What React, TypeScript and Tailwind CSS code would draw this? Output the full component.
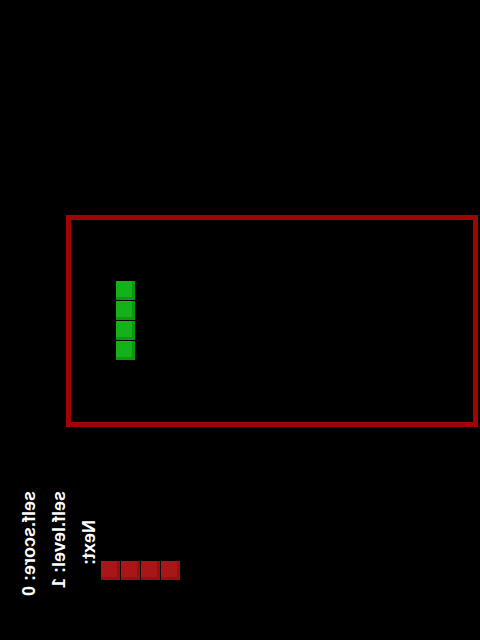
const Block = ({ color }: { color: "green" | "red" }) => (
  <div
    className={
      color === "green"
        ? "w-[19px] h-[19px] bg-[#15b11b] border-r-[3px] border-b-[3px] border-[#0c980f]"
        : "w-[19px] h-[19px] bg-[#a81717] border-r-[3px] border-b-[3px] border-[#980f0f]"
    }
  />
);

const SideLabel = ({ text, className = "" }: { text: string; className?: string }) => (
  <div
    className={`[writing-mode:vertical-lr] -scale-x-100 text-white font-bold text-[18px] leading-[18px] whitespace-nowrap ${className}`}
  >
    {text}
  </div>
);

export default function App() {
  return (
    <div
      className="w-[480px] h-[640px] bg-black overflow-hidden"
      style={{ fontFamily: "'Liberation Sans', Arial, sans-serif" }}
    >
      {/* Board */}
      <div className="ml-[66px] mt-[215px] w-[412px] h-[212px] border-[5px] border-[#a00404] pl-[45px] pt-[61px]">
        <div className="flex flex-col gap-px">
          <Block color="green" />
          <Block color="green" />
          <Block color="green" />
          <Block color="green" />
        </div>
      </div>

      {/* Stats + next piece */}
      <div className="flex items-start gap-3 pl-[20px] mt-[64px]">
        <SideLabel text="self.score: 0" />
        <SideLabel text="self.level: 1" />
        <SideLabel text="Next:" className="mt-[29px]" />
        <div className="flex gap-px mt-[70px] -ml-[9px]">
          <Block color="red" />
          <Block color="red" />
          <Block color="red" />
          <Block color="red" />
        </div>
      </div>
    </div>
  );
}
